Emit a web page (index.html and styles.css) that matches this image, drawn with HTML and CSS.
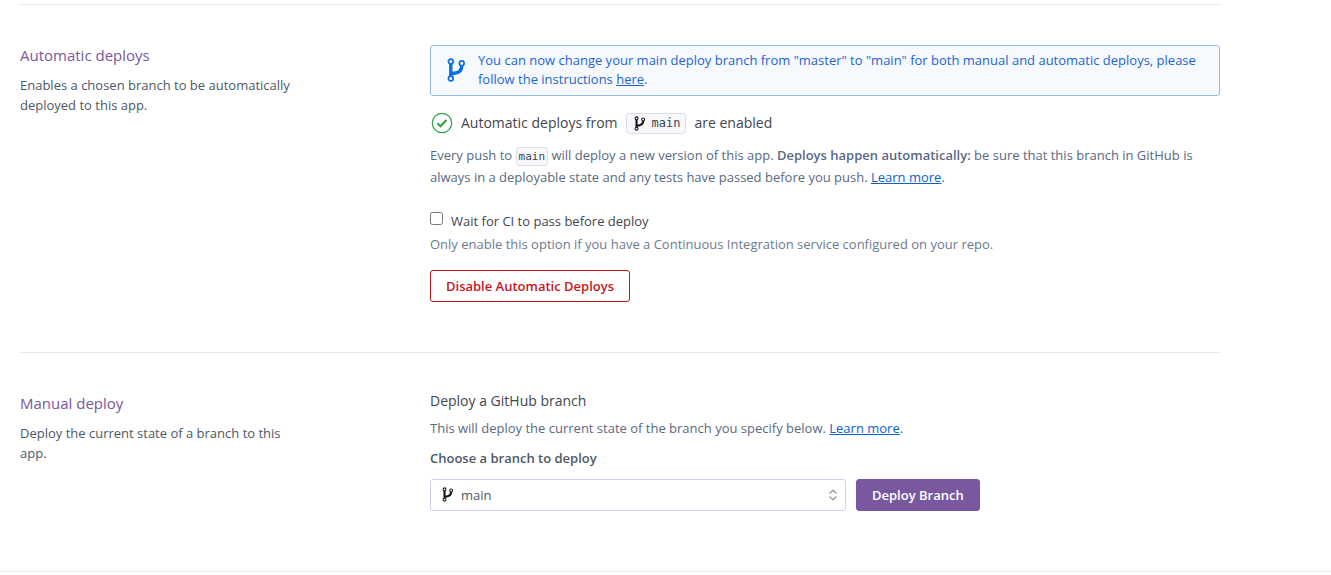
FILE: index.html
```html
<!DOCTYPE html>
<html lang="en">
<head>
<meta charset="utf-8">
<title>Deploy settings</title>
<link rel="stylesheet" href="styles.css">
</head>
<body>
<svg class="sprite" aria-hidden="true">
  <symbol id="branch" viewBox="0 0 20 26">
    <g fill="none" stroke="currentColor">
      <path stroke-width="3.6" d="M4 6.500V19.500M4 17.500C7 15.500 15.500 17.500 15.500 8.500"/>
      <circle cx="4" cy="4" r="2.500" stroke-width="1.800" class="node"/>
      <circle cx="4" cy="22" r="2.500" stroke-width="1.800" class="node"/>
      <circle cx="15.500" cy="6" r="2.500" stroke-width="1.800" class="node"/>
    </g>
  </symbol>
</svg>
<main class="settings">
  <section class="section">
    <header class="intro">
      <h2>Automatic deploys</h2>
      <p>Enables a chosen branch to be automatically deployed to this app.</p>
    </header>
    <div class="content">
      <div class="notice">
        <svg class="notice-icon"><use href="#branch"/></svg>
        <p>You can now change your main deploy branch from "master" to "main" for both manual and automatic deploys, please follow the instructions <a href="#">here</a>.</p>
      </div>
      <div class="status">
        <svg class="check" viewBox="0 0 22 22" fill="none" stroke="currentColor"><circle cx="11" cy="11" r="9.700" stroke-width="1.200"/><path d="M6.500 11.300l3 3 6-6.300" stroke-width="2"/></svg>
        <span>Automatic deploys from</span>
        <span class="branch-tag"><svg class="branch-icon"><use href="#branch"/></svg><code>main</code></span>
        <span>are enabled</span>
      </div>
      <p class="detail">Every push to <code class="code">main</code> will deploy a new version of this app. <strong>Deploys happen automatically:</strong> be sure that this branch in GitHub is always in a deployable state and any tests have passed before you push. <a href="#">Learn more</a>.</p>
      <div class="ci">
        <input type="checkbox" id="ci">
        <label for="ci">Wait for CI to pass before deploy</label>
      </div>
      <p class="hint">Only enable this option if you have a Continuous Integration service configured on your repo.</p>
      <button type="button" class="button danger">Disable Automatic Deploys</button>
    </div>
  </section>
  <section class="section">
    <header class="intro">
      <h2>Manual deploy</h2>
      <p>Deploy the current state of a branch to this app.</p>
    </header>
    <form class="content">
      <h3>Deploy a GitHub branch</h3>
      <p class="about">This will deploy the current state of the branch you specify below. <a href="#">Learn more</a>.</p>
      <label class="field-label" for="branch-select">Choose a branch to deploy</label>
      <div class="controls">
        <div class="picker">
          <select id="branch-select"><option>main</option></select>
          <svg class="branch-icon"><use href="#branch"/></svg>
          <svg class="arrows" viewBox="0 0 10 12" fill="none" stroke="currentColor" stroke-width="1.500"><path d="M1.500 4.500L5 1.300l3.500 3.200M1.500 7.500L5 10.700l3.500-3.200"/></svg>
        </div>
        <button type="button" class="button primary">Deploy Branch</button>
      </div>
    </form>
  </section>
</main>
<footer class="footer"></footer>
</body>
</html>
```
FILE: styles.css
```css
* { box-sizing: border-box; }
body {
  margin: 0;
  padding-top: 4px;
  background: #fff;
  color: #596981;
  font: 13px/20px "Open Sans", "Noto Sans", sans-serif;
}
h2, h3, p { margin: 0; font-weight: 400; }
strong { font-weight: 600; }
a { color: #0b63ce; text-underline-offset: 1px; }
.sprite { position: absolute; width: 0; height: 0; }
.node { fill: #fff; }
.settings { max-width: 1240px; padding: 0 20px; }
.section {
  display: grid;
  grid-template-columns: 290px minmax(0, 1fr);
  column-gap: 120px;
  padding: 40px 0 50px;
  border-top: 1px solid #e9e9ec;
}
.intro { color: #4d5866; }
.intro h2 { margin-bottom: 10px; color: #79589f; font-size: 15px; line-height: 20px; }
.notice {
  display: flex;
  align-items: center;
  gap: 12px;
  padding: 5px 16px 6px;
  border: 1px solid #95bbe3;
  border-radius: 3px;
  background: #f6faff;
  color: #1d64cf;
  line-height: 19px;
}
.notice p { flex: 1; }
.notice a { color: inherit; }
.notice-icon { flex: none; width: 19px; height: 26px; color: #0b6ee8; }
.status {
  display: flex;
  align-items: center;
  gap: 8px;
  margin: 16px 0 10px;
  color: #3f4650;
  font-size: 14px;
  line-height: 22px;
}
.check { width: 22px; height: 22px; margin-left: 1px; color: #2fa144; }
.branch-icon { width: 12px; height: 15px; color: #111; }
.branch-tag {
  display: inline-flex;
  align-items: center;
  gap: 6px;
  height: 21px;
  padding: 0 5px 0 7px;
  border: 1px solid #dcdfea;
  border-radius: 3px;
  background: #f7f8fb;
}
code { color: #3f4650; font: 12px/15px "DejaVu Sans Mono", monospace; }
.code { padding: 2px; border: 1px solid #dcdfea; border-radius: 3px; background: #f7f8fb; font-size: 11px; }
.detail { line-height: 22px; }
.ci { display: flex; align-items: flex-start; gap: 8px; margin-top: 23px; color: #3f4650; }
.ci input { width: 13px; height: 13px; margin: 1px 0 0; }
.hint { margin: 3px 0 16px; color: #6b7b90; }
.button {
  height: 32px;
  padding: 0 15px;
  border: 1px solid;
  border-radius: 3px;
  font: 600 13px/20px "Open Sans", "Noto Sans", sans-serif;
}
.danger { border-color: #c5161d; background: #fff; color: #c5161d; }
.primary { border-color: #79589f; background: #79589f; color: #fff; }
h3 { margin-bottom: 9px; color: #3f4650; font-size: 14px; line-height: 16px; }
.about { margin-bottom: 10px; }
.field-label { display: block; margin-bottom: 11px; color: #4d5866; font-weight: 600; }
.controls { display: flex; gap: 10px; }
.picker { position: relative; flex: 0 1 416px; }
.picker select {
  width: 100%;
  height: 32px;
  padding: 0 30px;
  appearance: none;
  border: 1px solid #cfd0e6;
  border-radius: 3px;
  background: #fff;
  color: #4d5866;
  font: 13px/20px "Open Sans", "Noto Sans", sans-serif;
}
.picker svg { position: absolute; pointer-events: none; }
.picker .branch-icon { left: 12px; top: 8px; }
.arrows { right: 8px; top: 10px; width: 10px; height: 12px; color: #96a0ae; }
.footer { margin-top: 10px; border-top: 1px solid #e9e9ec; }
```
